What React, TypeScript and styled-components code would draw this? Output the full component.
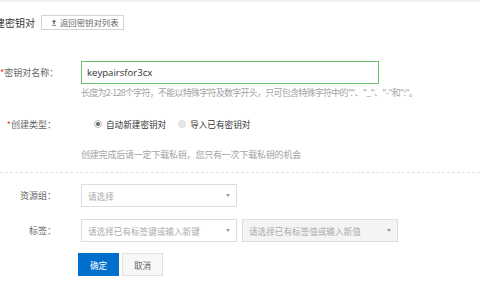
import styled, { createGlobalStyle } from 'styled-components';

const GlobalStyle = createGlobalStyle`
  html, body {
    margin: 0;
    padding: 0;
    background: #fff;
    overflow: hidden;
  }
  body {
    font-family: "Noto Sans CJK SC", "Open Sans", sans-serif;
    font-size: 9px;
    color: #666;
  }
`;

const Page = styled.div`
  width: 480px;
  height: 300px;
  border-top: 2px solid #f0f0f0;
  box-sizing: border-box;
`;

const Header = styled.div`
  display: flex;
  align-items: center;
  gap: 6px;
  margin: 13px 0 0 -15px;
`;

const Title = styled.h2`
  margin: 0;
  font-size: 10px;
  font-weight: normal;
  color: #333;
  line-height: 14px;
`;

const BackButton = styled.button`
  display: flex;
  align-items: center;
  gap: 3px;
  height: 15px;
  width: 83px;
  padding: 0 0 0 9px;
  border: 1px solid #d4d4d4;
  background: #fff;
  color: #666;
  font-family: inherit;
  font-size: 8.4px;
  line-height: 1;
  box-sizing: border-box;
`;

const Form = styled.div`
  display: flex;
  flex-direction: column;
`;

const Row = styled.div<{ $top: number }>`
  display: grid;
  grid-template-columns: 56px 1fr;
  column-gap: 25px;
  align-items: center;
  margin-top: ${(p) => p.$top}px;
`;

const Label = styled.label`
  text-align: right;
  white-space: nowrap;
  color: #666;
  font-size: 9px;
`;

const Star = styled.span`
  color: #e4393c;
`;

const TextInput = styled.div`
  width: 298px;
  height: 23px;
  box-sizing: border-box;
  border: 1px solid #6cc26c;
  padding-left: 5px;
  display: flex;
  align-items: center;
  font-family: "Open Sans", sans-serif;
  font-size: 9.6px;
  color: #333;
`;

const Hint = styled.div<{ $top: number; $spacing: number }>`
  margin: ${(p) => p.$top}px 0 0 81px;
  color: #a3a3a3;
  font-size: 9px;
  line-height: 12px;
  white-space: nowrap;
  letter-spacing: ${(p) => p.$spacing}px;
`;

const RadioGroup = styled.div`
  display: flex;
  align-items: center;
  padding-left: 13px;
  gap: 12px;
  height: 14px;
`;

const RadioItem = styled.span`
  display: flex;
  align-items: center;
  gap: 4px;
  color: #333;
  font-size: 8.6px;
`;

const RadioDot = styled.span<{ $checked?: boolean }>`
  width: 8px;
  height: 8px;
  border-radius: 50%;
  box-sizing: border-box;
  border: 1px solid ${(p) => (p.$checked ? '#bbb' : '#ddd')};
  background: ${(p) => (p.$checked ? '#fff' : '#e8e8e8')};
  display: flex;
  align-items: center;
  justify-content: center;
  &::after {
    content: '';
    width: 4px;
    height: 4px;
    border-radius: 50%;
    background: ${(p) => (p.$checked ? '#666' : 'transparent')};
  }
`;

const Divider = styled.div`
  margin-top: 11px;
  border-top: 1px dashed #e2e2e2;
`;

const SelectGroup = styled.div`
  display: flex;
  gap: 5px;
`;

const Select = styled.div<{ $disabled?: boolean }>`
  width: 156px;
  height: 23px;
  box-sizing: border-box;
  border: 1px solid #dedede;
  background: ${(p) => (p.$disabled ? '#f4f4f4' : '#fff')};
  display: flex;
  align-items: center;
  justify-content: space-between;
  padding: 0 6px 0 6px;
  color: #aaa;
  font-size: 8.6px;
`;

const Caret = styled.span`
  width: 0;
  height: 0;
  border-left: 2.5px solid transparent;
  border-right: 2.5px solid transparent;
  border-top: 3px solid #999;
`;

const Actions = styled.div`
  display: flex;
  gap: 3px;
  margin: 11px 0 0 78px;
`;

const Button = styled.button<{ $primary?: boolean }>`
  width: 41px;
  height: 23px;
  box-sizing: border-box;
  font-family: inherit;
  font-size: 8.6px;
  border: 1px solid ${(p) => (p.$primary ? '#0070cc' : '#e1e1e1')};
  background: ${(p) => (p.$primary ? '#0070cc' : '#f7f7f7')};
  color: ${(p) => (p.$primary ? '#fff' : '#666')};
  padding: 0;
`;

function BackIcon() {
  return (
    <svg width="6" height="7" viewBox="0 0 6 7">
      <path d="M3 0.5 L5.5 3 H3.8 V5 H2.2 V3 H0.5 Z" fill="#777" />
      <rect x="1" y="5.8" width="4" height="1" fill="#777" />
    </svg>
  );
}

export default function App() {
  return (
    <>
      <GlobalStyle />
      <Page>
        <Header>
          <Title>创建密钥对</Title>
          <BackButton>
            <BackIcon />
            返回密钥对列表
          </BackButton>
        </Header>
        <Form>
          <Row $top={31}>
            <Label>
              <Star>*</Star>密钥对名称：
            </Label>
            <TextInput>keypairsfor3cx</TextInput>
          </Row>
          <Hint $top={3} $spacing={-0.75}>
            长度为2-128个字符，不能以特殊字符及数字开头，只可包含特殊字符中的"."、"_"、"-"和":"。
          </Hint>
          <Row $top={18}>
            <Label>
              <Star>*</Star>创建类型：
            </Label>
            <RadioGroup>
              <RadioItem>
                <RadioDot $checked />
                自动新建密钥对
              </RadioItem>
              <RadioItem>
                <RadioDot />
                导入已有密钥对
              </RadioItem>
            </RadioGroup>
          </Row>
          <Hint $top={18} $spacing={-0.2}>
            创建完成后请一定下载私钥，您只有一次下载私钥的机会
          </Hint>
          <Divider />
          <Row $top={11}>
            <Label>资源组：</Label>
            <Select>
              请选择
              <Caret />
            </Select>
          </Row>
          <Row $top={12}>
            <Label>标签：</Label>
            <SelectGroup>
              <Select>
                请选择已有标签键或输入新键
                <Caret />
              </Select>
              <Select $disabled>
                请选择已有标签值或输入新值
                <Caret />
              </Select>
            </SelectGroup>
          </Row>
          <Actions>
            <Button $primary>确定</Button>
            <Button>取消</Button>
          </Actions>
        </Form>
      </Page>
    </>
  );
}
